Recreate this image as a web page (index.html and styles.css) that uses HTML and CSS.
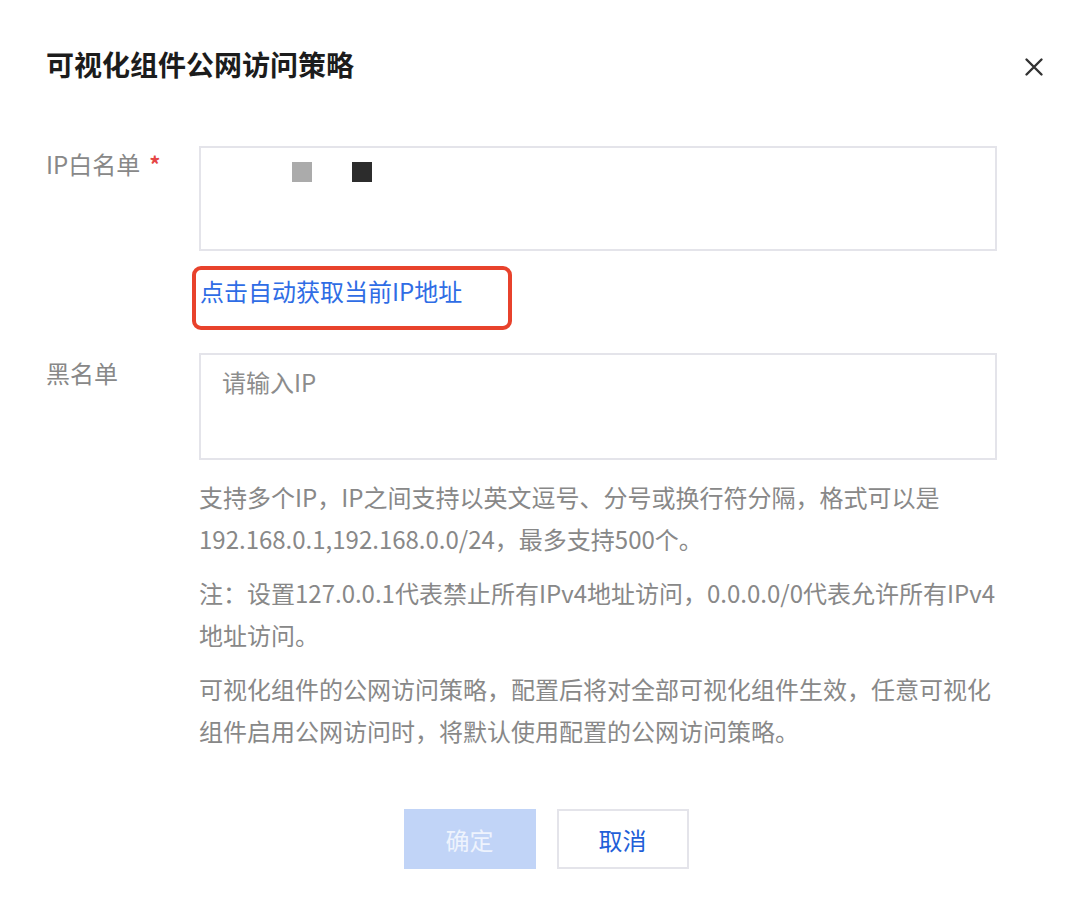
FILE: index.html
```html
<!DOCTYPE html>
<html lang="zh-CN">
<head>
<meta charset="utf-8">
<title>可视化组件公网访问策略</title>
<link rel="stylesheet" href="styles.css">
</head>
<body>
<div class="dialog">
  <div class="header">
    <h1 class="title">可视化组件公网访问策略</h1>
    <button class="close" aria-label="关闭">
      <svg width="20" height="20" viewBox="0 0 20 20"><path d="M2.5 2.5 L17.5 17.5 M17.5 2.5 L2.5 17.5" stroke="#333" stroke-width="2.4" stroke-linecap="round" fill="none"/></svg>
    </button>
  </div>

  <div class="form">
    <div class="row">
      <div class="label">IP白名单<span class="req">*</span></div>
      <div class="control">
        <div class="textbox filled"><span class="sq sq-gray"></span><span class="sq sq-dark"></span></div>
        <div class="link-wrap">
          <a class="link" href="#">点击自动获取当前IP地址</a>
          <span class="highlight"></span>
        </div>
      </div>
    </div>

    <div class="row row-black">
      <div class="label">黑名单</div>
      <div class="control">
        <textarea class="textbox" placeholder="请输入IP"></textarea>
        <div class="help">
          <p>支持多个IP，IP之间支持以英文逗号、分号或换行符分隔，格式可以是<br>192.168.0.1,192.168.0.0/24，最多支持500个。</p>
          <p>注：设置127.0.0.1代表禁止所有IPv4地址访问，0.0.0.0/0代表允许所有IPv4<br>地址访问。</p>
          <p>可视化组件的公网访问策略，配置后将对全部可视化组件生效，任意可视化<br>组件启用公网访问时，将默认使用配置的公网访问策略。</p>
        </div>
      </div>
    </div>
  </div>

  <div class="footer">
    <button class="btn btn-primary" disabled>确定</button>
    <button class="btn btn-default">取消</button>
  </div>
</div>
</body>
</html>
```

FILE: styles.css
```css
* { box-sizing: border-box; }
html, body {
  margin: 0;
  padding: 0;
  background: #ffffff;
}
body {
  font-family: "Noto Sans CJK SC", "Noto Sans", sans-serif;
  color: #333;
}
.dialog {
  width: 1088px;
  height: 908px;
  padding: 44px 44px 0 46px;
}
.header {
  display: flex;
  justify-content: space-between;
  align-items: center;
  height: 40px;
}
.title {
  margin: 0;
  font-size: 28px;
  line-height: 40px;
  font-weight: 700;
  color: #1c1c1c;
}
.close {
  border: 0;
  background: none;
  padding: 0;
  width: 20px;
  height: 20px;
  margin-top: 6px;
  margin-right: 0;
  display: flex;
  cursor: pointer;
}
.form {
  margin-top: 62px;
  display: flex;
  flex-direction: column;
  gap: 44px;
}
.row {
  display: flex;
}
.label {
  width: 153px;
  flex: none;
  font-size: 24px;
  line-height: 36px;
  color: #888;
}
.row-black .label {
  padding-top: 2px;
}
.req {
  color: #e54545;
  font-size: 22px;
  font-weight: 700;
  margin-left: 9px;
  position: relative;
  top: -1px;
}
.control {
  width: 798px;
}
.textbox {
  display: block;
  width: 798px;
  height: 105px;
  border: 2px solid #e4e4ea;
  background: #fff;
  margin: 0;
  resize: none;
  outline: none;
  font-family: inherit;
  font-size: 24px;
  line-height: 36px;
  padding: 9px 21px;
  color: #333;
}
textarea.textbox {
  height: 107px;
}
.textbox::placeholder {
  color: #8c8c8c;
}
.filled {
  display: flex;
  padding: 14px 0 0 91px;
  gap: 40px;
}
.sq {
  width: 20px;
  height: 20px;
  display: block;
}
.sq-gray { background: #ababab; }
.sq-dark { background: #2c2c2c; }
.link-wrap {
  position: relative;
  margin-top: 22px;
  height: 36px;
  padding-left: 1px;
}
.link {
  font-size: 24px;
  line-height: 36px;
  color: #2f6de5;
  text-decoration: none;
}
.highlight {
  position: absolute;
  left: -7px;
  top: -7px;
  width: 320px;
  height: 64px;
  border: 4px solid #e8422c;
  border-radius: 9px;
  pointer-events: none;
}
.help {
  margin-top: 16px;
  font-size: 24px;
  line-height: 42px;
  color: #888;
}
.help p {
  margin: 0 0 12px 0;
}
.footer {
  margin-top: 45px;
  display: flex;
  justify-content: center;
  gap: 21px;
  padding-left: 4px;
  margin-left: -46px;
  margin-right: -44px;
}
.btn {
  width: 132px;
  height: 60px;
  font-family: inherit;
  font-size: 24px;
  border-radius: 0;
  padding: 0;
}
.btn-primary {
  background: #c1d4f7;
  border: 0;
  color: #eef3fd;
}
.btn-default {
  background: #fff;
  border: 2px solid #e4e4ea;
  color: #1f5fd8;
}
```
